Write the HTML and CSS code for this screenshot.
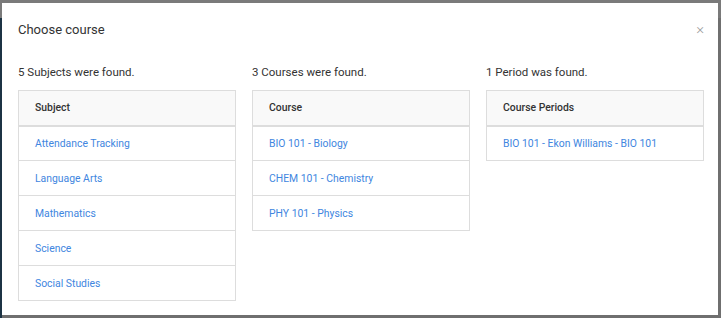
FILE: index.html
```html
<!DOCTYPE html>
<html>
<head>
<meta charset="utf-8">
<link rel="stylesheet" href="styles.css">
</head>
<body>
<div class="backdrop">
  <div class="modal">
    <div class="modal-header">
      <h1 class="modal-title">Choose course</h1>
      <span class="close">&times;</span>
    </div>
    <div class="columns">
      <div class="col">
        <p class="count">5 Subjects were found.</p>
        <table class="list">
          <thead><tr><th>Subject</th></tr></thead>
          <tbody>
            <tr><td><a href="#">Attendance Tracking</a></td></tr>
            <tr><td><a href="#">Language Arts</a></td></tr>
            <tr><td><a href="#">Mathematics</a></td></tr>
            <tr><td><a href="#">Science</a></td></tr>
            <tr><td><a href="#">Social Studies</a></td></tr>
          </tbody>
        </table>
      </div>
      <div class="col">
        <p class="count">3 Courses were found.</p>
        <table class="list">
          <thead><tr><th>Course</th></tr></thead>
          <tbody>
            <tr><td><a href="#">BIO 101 - Biology</a></td></tr>
            <tr><td><a href="#">CHEM 101 - Chemistry</a></td></tr>
            <tr><td><a href="#">PHY 101 - Physics</a></td></tr>
          </tbody>
        </table>
      </div>
      <div class="col">
        <p class="count">1 Period was found.</p>
        <table class="list">
          <thead><tr><th>Course Periods</th></tr></thead>
          <tbody>
            <tr><td><a href="#">BIO 101 - Ekon Williams - BIO 101</a></td></tr>
          </tbody>
        </table>
      </div>
    </div>
  </div>
</div>
</body>
</html>
```
FILE: styles.css
```css
* { box-sizing: border-box; }
html, body { margin: 0; padding: 0; }
body {
  width: 721px;
  height: 318px;
  overflow: hidden;
  font-family: Roboto, "Liberation Sans", sans-serif;
  background: linear-gradient(to right, #1c3344 0, #1c3344 2px, #6f6f6f 2px);
}
.backdrop {
  padding: 3px 3px 3px 2px;
  height: 318px;
  background: linear-gradient(to bottom, #7a7a7a 0, #7a7a7a 18px, transparent 18px);
}
.modal {
  background: #fff;
  width: 716px;
  height: 312px;
  padding: 0 14px 0 16px;
}
.modal-header {
  display: flex;
  justify-content: space-between;
  align-items: center;
  height: 52px;
}
.modal-title {
  margin: 0;
  font-size: 13px;
  font-weight: 400;
  color: #333;
}
.close {
  font-size: 15px;
  line-height: 15px;
  color: #9a9a9a;
  font-weight: 300;
  margin-right: 0;
}
.columns {
  display: grid;
  grid-template-columns: repeat(3, 218px);
  gap: 16px;
}
.count {
  margin: 10px 0 10px;
  font-size: 11.5px;
  line-height: 15px;
  color: #333;
}
.list {
  width: 100%;
  border-collapse: collapse;
  border: 1px solid #ddd;
}
.list th {
  background: #f9f9f9;
  text-align: left;
  font-size: 10.4px;
  font-weight: 500;
  color: #333;
  height: 35px;
  padding: 0 16px;
  border-bottom: 2px solid #ddd;
}
.list td {
  height: 35px;
  padding: 0 16px;
  border-top: 1px solid #ddd;
  font-size: 10.4px;
}
.list a {
  color: #4186e0;
  text-decoration: none;
}
```
